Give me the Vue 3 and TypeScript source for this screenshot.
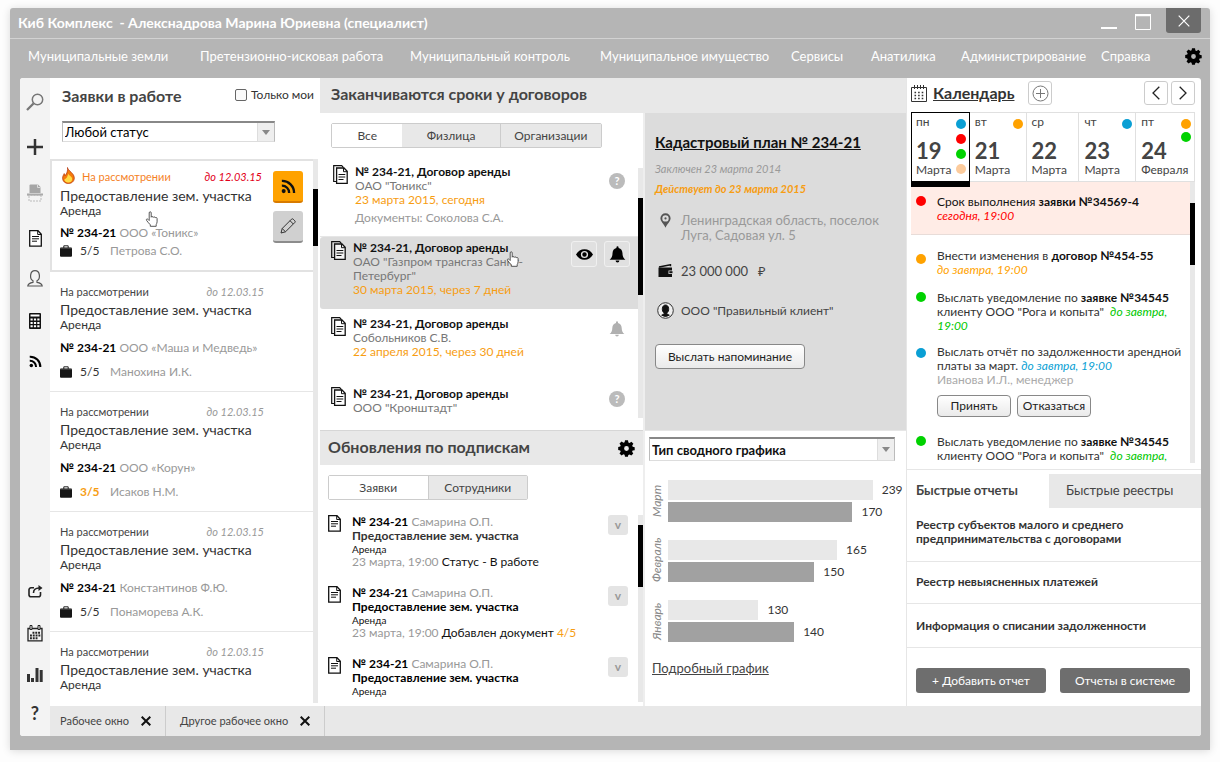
<script setup lang="ts">
import { ref } from 'vue'

interface Request { id: number; who?: string; progress?: string; person?: string; hot?: boolean; late?: boolean }
interface Contract { id: number; owner: string; due?: string; note?: string; state: 'help' | 'open' | 'bell' }
interface Update { id: number; text?: string; progress?: string; fresh?: boolean }
interface Day { name: string; num: number; month: string; dots: string[] }
interface Bar { value: number; share: number }

const menu = ['Муниципальные земли', 'Претензионно-исковая работа', 'Муниципальный контроль', 'Муниципальное имущество', 'Сервисы', 'Анатилика', 'Администрирование', 'Справка']

const onlyMine = ref(false)
const status = ref('Любой статус')
const chartType = ref('Тип сводного графика')

const requests: Request[] = [
  { id: 1, who: 'ООО «Тоникс»', progress: '5/5', person: 'Петрова С.О.', hot: true },
  { id: 2, who: 'ООО «Маша и Медведь»', progress: '5/5', person: 'Манохина И.К.' },
  { id: 3, who: 'ООО «Корун»', progress: '3/5', person: 'Исаков Н.М.', late: true },
  { id: 4, who: 'Константинов Ф.Ю.', progress: '5/5', person: 'Понаморева А.К.' },
  { id: 5 },
]

const contracts: Contract[] = [
  { id: 1, owner: 'ОАО "Тоникс"', due: '23 марта 2015, сегодня', note: 'Документы: Соколова С.А.', state: 'help' },
  { id: 2, owner: 'ОАО "Газпром трансгаз Санкт-Петербург"', due: '30 марта 2015, через 7 дней', state: 'open' },
  { id: 3, owner: 'Собольников С.В.', due: '22 апреля 2015, через 30 дней', state: 'bell' },
  { id: 4, owner: 'ООО "Кронштадт"', state: 'help' },
]

const updates: Update[] = [
  { id: 1, text: 'Статус - В работе' },
  { id: 2, text: 'Добавлен документ', progress: '4/5', fresh: true },
  { id: 3, fresh: true },
]

const chart: { month: string; bars: Bar[] }[] = [
  { month: 'Март', bars: [{ value: 239, share: 86 }, { value: 170, share: 77.5 }] },
  { month: 'Февраль', bars: [{ value: 165, share: 71 }, { value: 150, share: 61.5 }] },
  { month: 'Январь', bars: [{ value: 130, share: 38 }, { value: 140, share: 53 }] },
]

const days: Day[] = [
  { name: 'пн', num: 19, month: 'Марта', dots: ['blue', 'red', 'green', 'peach'] },
  { name: 'вт', num: 21, month: 'Марта', dots: ['orange'] },
  { name: 'ср', num: 22, month: 'Марта', dots: [] },
  { name: 'чт', num: 23, month: 'Марта', dots: ['blue'] },
  { name: 'пт', num: 24, month: 'Февраля', dots: ['orange', 'green'] },
]

const reports = ['Реестр субъектов малого и среднего предпринимательства с договорами', 'Реестр невыясненных платежей', 'Информация о списании задолженности']
const openWindows = ['Рабочее окно', 'Другое рабочее окно']
</script>

<template>
  <svg class="sprite" aria-hidden="true">
    <symbol id="i-gear" viewBox="0 0 17 17">
      <path fill="currentColor" fill-rule="evenodd" d="M7 .3h3l.4 2.1 1.2.5 1.8-1.2 2 2.1-1.2 1.8.5 1.2 2 .4v3l-2.1.4-.5 1.2 1.2 1.8-2 2-1.8-1.2-1.2.5-.4 1.9H7l-.4-2-1.2-.5-1.8 1.2-2.1-2 1.2-1.8-.5-1.2L.2 10V7l2-.4.5-1.2-1.2-1.8 2.1-2 1.8 1.2 1.2-.5zM8.500 6.100a2.400 2.400 0 1 0 0 4.800 2.400 2.400 0 0 0 0-4.800z" />
    </symbol>
    <symbol id="i-doc" viewBox="0 0 13 17">
      <path fill="#fff" stroke="#111" stroke-width="1.300" d="M.7.700h8.300l3.300 3.500v12H.7z" />
      <path fill="none" stroke="#111" d="M8.700.800v3.700h3.500M3 6.500h7M3 8.800h7M3 11.200h5" />
    </symbol>
    <symbol id="i-docs" viewBox="0 0 15 20">
      <path fill="none" stroke="#111" stroke-width="1.200" d="M3.500 16.500H.7V.7h8l1.800 2" />
      <path fill="#fff" fill-opacity=".7" stroke="#111" stroke-width="1.300" d="M3.600 3h7.400l3.200 3.300v12H3.600z" />
      <path fill="none" stroke="#111" d="M10.500 3v3.700h3.600M5.500 9.500h6.800M5.500 12h6.800M5.500 14.500h5" />
    </symbol>
    <symbol id="i-case" viewBox="0 0 12 12">
      <path fill="none" stroke="#222" d="M3.800 3V.8h4.400V3" />
      <rect y="2.500" width="12" height="9.300" rx="1" fill="#161616" />
      <path stroke="#555" stroke-width=".7" d="M.5 3.300h11" />
    </symbol>
    <symbol id="i-rss" viewBox="0 0 14 14">
      <circle cx="2.500" cy="11.300" r="1.900" fill="currentColor" />
      <path fill="none" stroke="currentColor" stroke-width="2.200" d="M.8 6.200a6.600 6.600 0 0 1 6.800 6.800M.8 1.800A11 11 0 0 1 12.200 13" />
    </symbol>
    <symbol id="i-bell" viewBox="0 0 16 16">
      <path fill="currentColor" d="M7 1.300a1 1 0 0 1 2 0v.6c2.400.5 3.600 2.400 3.700 5 .1 3 .8 4.600 2.700 6H.6c1.900-1.400 2.600-3 2.700-6 .1-2.600 1.300-4.500 3.700-5zM6.200 13.700h3.600a1.800 1.800 0 0 1-3.600 0z" />
    </symbol>
    <symbol id="i-hand" viewBox="0 0 14 16">
      <path fill="#fff" stroke="#444" stroke-width=".9" d="M4.200 9.500V1.900c0-1.600 2-1.600 2 0v4.300c.2-1.100 1.800-1 2 .2.400-.9 1.800-.7 2 .4.600-.7 1.900-.4 1.900.8v3.200c0 1.200-.6 2-.9 2.800v1.700H5.300v-1.500C4 12.700 2.900 10.900 1.700 9.600.600 8.300 2.200 7.400 3.200 8.500z" />
    </symbol>
    <symbol id="i-x" viewBox="0 0 10 10">
      <path fill="none" stroke="#111" stroke-width="2" d="M.7.700l8.600 8.600M9.300.700L.7 9.300" />
    </symbol>
  </svg>

  <div class="window">
    <header class="titlebar">
      <h1>Киб Комплекс&nbsp; - Алекснадрова Марина Юриевна (специалист)</h1>
      <button class="win-btn" aria-label="Свернуть"><svg width="16" height="16"><path d="M0 14h16" stroke="#fff" stroke-width="2" /></svg></button>
      <button class="win-btn" aria-label="Развернуть"><svg width="16" height="16"><path d="M.5 1.500v14h15v-14" fill="none" stroke="#fff" /><path d="M0 1h16" stroke="#fff" stroke-width="2.500" /></svg></button>
      <button class="win-btn close" aria-label="Закрыть"><svg width="12" height="12"><path d="M.7.700l10.600 10.600M11.300.700L.7 11.300" stroke="#fff" stroke-width="1.200" /></svg></button>
    </header>

    <div class="menubar">
      <nav><a v-for="m in menu" :key="m" href="#">{{ m }}</a></nav>
      <button class="plain" aria-label="Настройки"><svg width="17" height="17"><use href="#i-gear" /></svg></button>
    </div>

    <div class="body">
      <aside class="rail">
        <button class="plain" aria-label="Поиск"><svg width="18" height="18" fill="none" stroke="#777"><circle cx="11.500" cy="6.500" r="5.200" stroke-width="1.500" /><path d="M7.500 10.500L1 17" stroke-width="2.300" /></svg></button>
        <button class="plain add" aria-label="Добавить"><svg width="16" height="16"><path d="M8 0v16M0 8h16" stroke="#333" stroke-width="2.500" /></svg></button>
        <button class="plain print" aria-label="Печать"><svg width="16" height="18"><path d="M2.500 9V1.500a1 1 0 0 1 1-1h7.500L13.500 3v6z" fill="#a6a6a6" /><path d="M10.500.500v3h3" fill="none" stroke="#ddd" /><path d="M0 9.500h16v2H0z" fill="#aaa" /><path d="M.5 11.500h15M2 12v5h12v-5" fill="none" stroke="#bbb" stroke-dasharray="2 1" /></svg></button>
        <button class="plain paper" aria-label="Документы"><svg width="13" height="17"><use href="#i-doc" /></svg></button>
        <button class="plain person" aria-label="Клиенты"><svg width="16" height="17" fill="none" stroke="#555" stroke-width="1.200"><path d="M6 10.800C2.500 9 2.500.7 8 .7s5.500 8.300 2 10.100v1.500c3 .5 5 1.200 5.200 3.700H.8c.2-2.500 2.200-3.200 5.200-3.700z" /></svg></button>
        <button class="plain calc" aria-label="Калькулятор"><svg width="12" height="16"><rect width="12" height="16" rx="1" fill="#111" /><path fill="#fff" d="M1.500 1.500h9v2h-9zM1.500 5.500h2.200v2H1.500zM4.900 5.500h2.200v2H4.900zM8.300 5.500h2.200v2H8.300zM1.500 8.900h2.200v2H1.500zM4.900 8.900h2.200v2H4.900zM8.300 8.900h2.200v2H8.300zM1.500 12.200h2.200v2H1.500zM4.900 12.200h2.200v2H4.900zM8.300 12.200h2.200v2H8.300z" /></svg></button>
        <button class="plain feed" aria-label="Подписки"><svg width="13" height="13"><use href="#i-rss" /></svg></button>
        <span class="grow"></span>
        <button class="plain" aria-label="Поделиться"><svg width="15" height="13" fill="none" stroke="#222" stroke-width="1.600"><path d="M6 2.800H3A2 2 0 0 0 1 5v4.800a2 2 0 0 0 2 2h7.500a2 2 0 0 0 2-2V7" /><path d="M5.500 8C5.500 5 7.500 3 11 3" /><path d="M10.500 0l4 3-4 3z" fill="#222" stroke="none" /></svg></button>
        <button class="plain cal" aria-label="Календарь"><svg width="16" height="17" fill="none" stroke="#222"><path d="M1 3.500h14v12.300H1z" stroke-width="1.300" /><path d="M3 .5h2v4H3zM11 .5h2v4h-2z" fill="#f3f3f3" /><path d="M5.500 7.800h8M3 10.500h10.500M3 13.200h8" stroke-width="1.900" stroke-dasharray="1.900 .9" /></svg></button>
        <button class="plain stats" aria-label="Статистика"><svg width="16" height="14"><path d="M0 6h3v8H0zM4 10h3v4H4zM8.500 0h3v14h-3zM12.700 2h3v12h-3z" fill="#333" /></svg></button>
        <button class="plain ask" aria-label="Помощь">?</button>
      </aside>

      <main class="columns">
        <section class="requests">
          <div class="requests-head">
            <div class="head-line">
              <h2>Заявки в работе</h2>
              <label class="mine"><input v-model="onlyMine" type="checkbox">Только мои</label>
            </div>
            <div class="select-box">
              <select v-model="status" aria-label="Статус"><option>Любой статус</option></select>
              <span class="arrow" aria-hidden="true"></span>
            </div>
          </div>
          <div class="scroller">
            <div class="scroll-content">
              <article v-for="r in requests" :key="r.id" class="request" :class="{ hot: r.hot }">
                <p class="state">
                  <svg v-if="r.hot" class="flame" width="13" height="17"><path d="M5.500.500c.5 3.500 6.800 5.500 6.800 10.500 0 3.500-2.800 5.500-6 5.500S.600 14.300.600 11.200c0-2 1-3.300 1.600-4.600.7.700.8 1.400.9 2.200C4.800 6.800 6 3.600 5.500.500z" fill="#f47a0b" stroke="#b1320c" stroke-width=".7" /><path d="M6.200 6.500c.4 2 4 3 4 5.500s-1.800 3.500-4 3.500-4-1.200-3.800-3.200c1.200.2 3.400-2.300 3.800-5.800z" fill="#ffdc45" /></svg>
                  <span>На рассмотрении</span><i>до 12.03.15</i>
                </p>
                <h3>Предоставление зем. участка</h3>
                <p class="kind">Аренда</p>
                <p v-if="r.who" class="num"><b>№ 234-21</b> {{ r.who }}</p>
                <p v-if="r.person" class="docs"><svg width="12" height="12"><use href="#i-case" /></svg><span :class="{ late: r.late }">{{ r.progress }}</span>{{ r.person }}</p>
                <div v-if="r.hot" class="actions">
                  <button class="act orange" aria-label="Подписаться"><svg width="15" height="15"><use href="#i-rss" /></svg></button>
                  <button class="act" aria-label="Изменить"><svg width="16" height="16" fill="none" stroke="#333"><path d="M1 15l1.200-4.500L11.500 1.200a1.200 1.200 0 0 1 1.700 0l1.600 1.600a1.200 1.200 0 0 1 0 1.700L5.500 13.800zM2.200 10.500l3.300 3.300M10 2.700L13.300 6" /></svg></button>
                </div>
                <svg v-if="r.hot" class="hand" width="14" height="16"><use href="#i-hand" /></svg>
              </article>
            </div>
            <div class="track"><span class="thumb t-req"></span></div>
          </div>
        </section>

        <div class="middle">
          <h2 class="wide-head">Заканчиваются сроки у договоров</h2>
          <div class="middle-grid">
            <section class="contracts">
              <div class="tabs three">
                <button class="on">Все</button><button>Физлица</button><button>Организации</button>
              </div>
              <div class="scroller">
                <div class="scroll-content">
                  <article v-for="c in contracts" :key="c.id" class="contract" :class="['c' + c.id, { open: c.state === 'open' }]">
                    <svg class="lead" width="15" height="20"><use href="#i-docs" /></svg>
                    <div class="text">
                      <h4>№ 234-21, Договор аренды</h4>
                      <p class="owner">{{ c.owner }}</p>
                      <p v-if="c.due" class="due">{{ c.due }}</p>
                      <p v-if="c.note" class="note">{{ c.note }}</p>
                    </div>
                    <span v-if="c.state === 'help'" class="help">?</span>
                    <svg v-else-if="c.state === 'bell'" class="pale-bell" width="16" height="16"><use href="#i-bell" /></svg>
                    <template v-else>
                      <button class="square" aria-label="Смотреть"><svg width="17" height="11"><path fill-rule="evenodd" d="M0 5.500C2 2 5 .2 8.500.2S15 2 17 5.500c-2 3.500-5 5.300-8.500 5.300S2 9 0 5.500zM8.500 1.900a3.600 3.600 0 1 0 0 7.200 3.600 3.600 0 0 0 0-7.200z" /><circle cx="8.500" cy="5.500" r="2.200" /></svg></button>
                      <button class="square" aria-label="Напомнить"><svg width="17" height="17"><use href="#i-bell" /></svg></button>
                      <svg class="hand" width="14" height="16"><use href="#i-hand" /></svg>
                    </template>
                  </article>
                </div>
                <div class="track"><span class="thumb t-con"></span></div>
              </div>
            </section>

            <section class="detail">
              <h3><a href="#">Кадастровый план № 234-21</a></h3>
              <p class="signed">Заключен 23 марта 2014</p>
              <p class="valid">Действует до 23 марта 2015</p>
              <p class="row address"><svg width="11" height="15"><path fill="#555" fill-rule="evenodd" d="M5.500.200a5.100 5.100 0 0 1 5.100 5.100c0 3-3.300 5.500-5.100 9.500C3.700 10.800.400 8.300.400 5.300A5.100 5.100 0 0 1 5.500.200zm0 2a3.200 3.200 0 1 0 0 6.400 3.200 3.200 0 0 0 0-6.400z" /><circle cx="5.500" cy="5.400" r="1.100" fill="#555" /></svg><span>Ленинградская область, поселок Луга, Садовая ул. 5</span></p>
              <p class="row sum"><svg width="15" height="14"><path d="M1 3L12.500.700v1.500" fill="none" stroke="#111" stroke-width="1.400" /><path d="M.5 3.500h13.500v3h-3.500v3.500H14V13H.5z" fill="#111" /><path d="M11.300 7.200h3.200v2h-3.200z" fill="#111" /></svg><span>23 000 000 &nbsp; ₽</span></p>
              <p class="row client"><svg width="17" height="17"><circle cx="8.500" cy="8.500" r="7.800" fill="#fff" fill-opacity=".5" stroke="#333" /><path d="M7.200 11C4.300 9.200 4.800 3 8.500 3s4.200 6.200 1.300 8v1l2.500 1.200a7 7 0 0 1-7.600 0L7.200 12z" fill="#111" stroke="#111" /></svg><span>ООО "Правильный клиент"</span></p>
              <button class="soft remind">Выслать напоминание</button>
            </section>

            <section class="updates">
              <header>
                <h2>Обновления по подпискам</h2>
                <button class="plain" aria-label="Настройки подписок"><svg width="17" height="17"><use href="#i-gear" /></svg></button>
              </header>
              <div class="tabs two">
                <button class="on">Заявки</button><button>Сотрудники</button>
              </div>
              <div class="scroller">
                <div class="scroll-content">
                  <article v-for="u in updates" :key="u.id" class="update">
                    <svg class="lead" width="13" height="17"><use href="#i-doc" /></svg>
                    <div class="text">
                      <p class="who"><b>№ 234-21</b> Самарина О.П.</p>
                      <h4 :class="{ fresh: u.fresh }">Предоставление зем. участка</h4>
                      <p class="small">Аренда</p>
                      <p v-if="u.text" class="when">23 марта, 19:00 <span>{{ u.text }}</span> <em v-if="u.progress">{{ u.progress }}</em></p>
                    </div>
                    <button class="more" aria-label="Раскрыть">v</button>
                  </article>
                </div>
                <div class="track"><span class="thumb t-upd"></span></div>
              </div>
            </section>

            <section class="chart">
              <div class="select-box strong">
                <select v-model="chartType" aria-label="Тип графика"><option>Тип сводного графика</option></select>
                <span class="arrow" aria-hidden="true"></span>
              </div>
              <div v-for="g in chart" :key="g.month" class="group">
                <span class="month">{{ g.month }}</span>
                <div class="bars">
                  <div v-for="b in g.bars" :key="b.value" class="bar-row">
                    <span class="bar" :style="{ width: b.share + '%' }"></span>{{ b.value }}
                  </div>
                </div>
              </div>
              <a class="full" href="#">Подробный график</a>
            </section>
          </div>
        </div>

        <section class="side">
          <header class="cal-head">
            <svg width="16" height="17" fill="none" stroke="#333"><path d="M.5 2.500h15v14H.5zM3.500 0v4M6.500 0v4M9.500 0v4M12.500 0v4" /><path d="M3.500 7.500h9.500M3.500 10.500h9.500M3.500 13.500h9.500" stroke-width="1.600" stroke-dasharray="1.600 2" /></svg>
            <h2><a href="#">Календарь</a></h2>
            <button class="box plus" aria-label="Добавить событие"><svg width="17" height="17" fill="none" stroke="#777"><circle cx="8.500" cy="8.500" r="7.500" /><path d="M8.500 4v9M4 8.500h9" /></svg></button>
            <button class="box" aria-label="Назад"><svg width="8" height="14" fill="none" stroke="#222" stroke-width="1.300"><path d="M7.300.700L1 7l6.300 6.300" /></svg></button>
            <button class="box" aria-label="Вперёд"><svg width="8" height="14" fill="none" stroke="#222" stroke-width="1.300"><path d="M.7.700L7 7 .7 13.300" /></svg></button>
          </header>
          <div class="days">
            <button v-for="d in days" :key="d.name" class="day" :class="{ today: d.num === 19 }">
              <span class="wd">{{ d.name }}</span><strong>{{ d.num }}</strong><span class="mon">{{ d.month }}</span>
              <span class="dots"><i v-for="c in d.dots" :key="c" class="dot" :class="c"></i></span>
            </button>
          </div>
          <div class="scroller events-box">
            <ul class="events">
              <li class="urgent"><i class="dot red"></i><p>Срок выполнения <b>заявки №34569-4</b><br><em class="c-red">сегодня, 19:00</em></p></li>
              <li class="e2"><i class="dot orange"></i><p>Внести изменения в <b>договор №454-55</b><br><em class="c-orange">до завтра, 19:00</em></p></li>
              <li><i class="dot green"></i><p>Выслать уведомление по <b>заявке №34545</b><br>клиенту ООО "Рога и копыта" &nbsp;<em class="c-green">до завтра, 19:00</em></p></li>
              <li class="e4"><i class="dot blue"></i><div><p>Выслать отчёт по задолженности арендной платы за март. <em class="c-blue">до завтра, 19:00</em></p><p class="by">Иванова И.Л., менеджер</p>
                <div class="answers"><button class="soft">Принять</button><button class="soft">Отказаться</button></div></div></li>
              <li class="last"><i class="dot green"></i><p>Выслать уведомление по <b>заявке №34545</b><br>клиенту ООО "Рога и копыта" &nbsp;<em class="c-green">до завтра,</em></p></li>
            </ul>
            <div class="track"><span class="thumb t-cal"></span></div>
          </div>
          <div class="quick">
            <div class="quick-tabs"><button class="on">Быстрые отчеты</button><button>Быстрые реестры</button></div>
            <ul class="reports"><li v-for="r in reports" :key="r"><a href="#">{{ r }}</a></li></ul>
            <div class="quick-actions"><button>+ Добавить отчет</button><button>Отчеты в системе</button></div>
          </div>
        </section>
      </main>

      <footer class="taskbar">
        <div v-for="w in openWindows" :key="w" class="task">{{ w }}<button class="plain" aria-label="Закрыть окно"><svg width="10" height="10"><use href="#i-x" /></svg></button></div>
      </footer>
    </div>
  </div>
</template>

<style>
body { background: #fdfdfd; }
</style>

<style scoped>
* { box-sizing: border-box; }
h1, h2, h3, h4, p, ul { margin: 0; padding: 0; list-style: none; }
button, select, input { font: inherit; color: inherit; margin: 0; padding: 0; }
button { cursor: pointer; }
svg { display: block; flex: none; }
.sprite { position: absolute; width: 0; height: 0; }
.plain { border: 0; background: none; display: grid; place-items: center; flex: none; color: #000; }

.window {
  margin: 8px 10px 12px;
  height: calc(100vh - 20px);
  min-height: 600px;
  display: flex;
  flex-direction: column;
  padding-bottom: 14px;
  background: #b5b5b5;
  border-radius: 3px 3px 0 0;
  box-shadow: 0 1px 9px rgba(0, 0, 0, .14);
  font: 12px/14px Lato, "Noto Sans", sans-serif;
  color: #333;
}
.titlebar { display: flex; height: 31px; padding: 0 9px 0 8px; border-bottom: 1px solid #d2d2d2; color: #fff; }
.titlebar h1 { flex: 1; font-size: 14px; line-height: 30px; }
.win-btn { width: 16px; height: 16px; margin: 6px 18px 0 0; border: 0; background: none; }
.win-btn.close { width: 35px; height: 25px; margin: 0 0 0 -3px; display: grid; place-items: center; background: #6c6c6c; border-radius: 0 0 3px 3px; }
.menubar { display: flex; align-items: center; height: 39px; padding: 0 8px 4px 18px; }
.menubar nav { flex: 1; display: grid; grid-template-columns: 172fr 210fr 190fr 191fr 80fr 90fr 140fr 84fr; color: #fff; font-size: 13px; line-height: 16px; padding-bottom: 2px; }
.menubar a { color: inherit; text-decoration: none; white-space: nowrap; }

.body { flex: 1; min-height: 0; margin: 0 9px 0 10px; display: grid; grid-template: minmax(0, 1fr) 30px / 30px minmax(0, 1fr); background: #fff; border-radius: 3px; overflow: hidden; }
.rail { grid-row: 1 / 3; display: flex; flex-direction: column; align-items: center; padding: 15px 0 14px; background: #f3f3f3; }
.rail .add { margin-top: 28px; }
.rail .print { margin-top: 29px; }
.rail .paper { margin-top: 28px; }
.rail .person { margin-top: 23px; }
.rail .calc { margin-top: 26px; }
.rail .feed { margin-top: 26px; }
.grow { flex: 1; }
.rail .cal { margin-top: 27px; }
.rail .stats { margin-top: 26px; }
.rail .ask { margin-top: 22px; font-size: 18px; line-height: 18px; font-weight: 700; color: #333; }
.columns { min-height: 0; display: grid; grid-template-columns: minmax(0, 270fr) minmax(0, 587fr) minmax(0, 294fr); grid-template-rows: minmax(0, 1fr); }

.scroller { flex: 1; min-height: 0; display: flex; }
.scroll-content { flex: 1; min-width: 0; overflow: hidden; }
.track { position: relative; width: 5px; flex: none; background: #e8e8e8; }
.thumb { position: absolute; left: 0; width: 5px; background: #000; }

h2 { font-size: 16px; line-height: 20px; color: #444; }

/* requests */
.requests { display: flex; flex-direction: column; min-height: 0; }
.requests-head { height: 81px; padding: 8px 6px 0 12px; }
.head-line { display: flex; justify-content: space-between; }
.mine { display: flex; align-items: center; gap: 4px; height: 18px; }
.mine input { appearance: none; width: 12px; height: 12px; border: 1px solid #666; border-radius: 2px; background: #fafafa; }
.mine input:checked { background: #555; }
.select-box { position: relative; display: flex; background: #fff; border: 1px solid #bbb; border-top: 2px solid #888; border-bottom-color: #ddd; }
.select-box select { flex: 1; height: 18px; padding-left: 2px; border: 0; background: transparent; appearance: none; color: #000; font-size: 13px; line-height: 18px; }
.arrow { position: absolute; right: 0; top: 0; bottom: 0; width: 17px; display: grid; place-items: center; background: #eee; border-left: 1px solid #ddd; pointer-events: none; }
.arrow::after { content: ""; border: 4px solid transparent; border-top: 5px solid #888; border-bottom: 0; }
.requests .select-box { width: 213px; margin-top: 15px; }
.requests .scroller { padding: 0 2px 3px 0; }
.request { position: relative; height: 120px; padding: 13px 10px; border-bottom: 1px solid #e6e6e6; color: #999; }
.state { display: flex; align-items: center; gap: 7px; width: 204px; height: 14px; font-size: 11px; color: #444; }
.state i { margin-left: auto; color: #999; }
.request h3 { margin-top: 3px; font-size: 14px; font-weight: 400; line-height: 16px; color: #333; }
.kind { color: #333; }
.num { margin-top: 9px; }
.num b { color: #000; }
.docs { display: flex; align-items: center; margin-top: 10px; }
.docs span { width: 22px; margin: 0 8px; color: #333; }
.docs .late { color: #f79d12; font-weight: 700; }
.request.hot { height: 113px; padding: 9px 8px; border: 2px solid #e2e2e2; border-right: 0; }
.hot .state { color: #f5821f; width: 202px; }
.hot .state i { color: #e2001a; }
.flame { margin: -3px 0 0 2px; }
.hot h3 { margin-top: 4px; }
.hot .num { margin-top: 8px; }
.hot .docs { margin-top: 4px; }
.actions { position: absolute; right: 10px; top: 10px; display: grid; gap: 8px; }
.act { width: 30px; height: 32px; display: grid; place-items: center; border: 0; border-bottom: 2px solid #8c8c8c; border-radius: 3px; background: #d0d0d0; color: #111; }
.act.orange { background: #ffa200; border-bottom-color: #d87b00; }
.hand { position: absolute; }
.request .hand { left: 93px; top: 50px; }
.t-req { top: 30px; height: 57px; }

/* contracts, detail, subscriptions and chart */
.middle { display: flex; flex-direction: column; min-height: 0; border-right: 1px solid #e6e6e6; }
.wide-head { height: 35px; padding: 6px 11px 0; background: #e8e8e8; }
.middle-grid { flex: 1; min-height: 0; display: grid; grid-template: minmax(0, 317fr) minmax(0, 276fr) / minmax(0, 325fr) minmax(0, 261fr); }
.contracts, .updates { display: flex; flex-direction: column; min-height: 0; border-right: 2px solid #eee; }
.tabs { display: flex; height: 25px; flex: none; margin: 10px 41px 0 11px; border: 1px solid #ccc; border-radius: 2px; color: #444; }
.tabs button { flex: 1; border: 0; border-left: 1px solid #ccc; background: #e8e8e8; }
.tabs .on { background: #fff; border: 0; }
.three button:nth-child(1) { flex-grow: 71; }
.three button:nth-child(2) { flex-grow: 98; border: 0; }
.three button:nth-child(3) { flex-grow: 101; }
.contracts .scroll-content { margin-top: 12px; }
.contracts .track { margin: 20px 0 12px; }
.contract { position: relative; display: flex; gap: 7px; min-height: 40px; padding: 4px 8px 12px 11px; }
.contract .text { flex: 1; }
.c1 { padding: 5px 13px 11px 13px; border-bottom: 1px solid #e6e6e6; }
.c1 .help { margin-top: 8px; }
.open { background: #dcdcdc; border-radius: 3px 0 0 3px; }
.open .text { margin-right: 16px; }
.c3 { padding: 8px 13px 28px 11px; }
.c4 { padding: 0 13px 12px 11px; }
h4 { font-size: 12px; line-height: 14px; color: #111; }
.owner { color: #777; }
.due { color: #f79d12; }
.note { margin-top: 4px; color: #999; }
.help { width: 16px; height: 16px; margin-top: 4px; border-radius: 50%; background: #bbb; color: #fff; font-size: 11px; font-weight: 700; line-height: 16px; text-align: center; flex: none; }
.pale-bell { margin-top: 4px; color: #b0b0b0; }
.square { width: 26px; height: 26px; flex: none; display: grid; place-items: center; border: 1px solid #f0f0f0; border-radius: 3px; background: #e0e0e0; color: #000; }
.contract .hand { left: 186px; top: 14px; }
.t-con { top: 30px; height: 97px; }

.detail { padding: 19px 10px 0 10px; background: #dcdcdc; }
.detail h3 { font-size: 16px; line-height: 20px; white-space: nowrap; }
.detail h3 a { color: #111; font-size: 15px; }
.signed, .valid { font-style: italic; font-size: 11px; line-height: 14px; color: #999; }
.signed { margin-top: 10px; }
.valid { margin-top: 6px; font-weight: 700; color: #f79d12; }
.row { display: grid; grid-template-columns: 20px 1fr; gap: 6px; align-items: center; color: #444; font-size: 13px; line-height: 16px; }
.row svg { justify-self: center; }
.address { margin-top: 17px; align-items: start; line-height: 15px; color: #999; }
.sum { margin-top: 20px; }
.client { margin-top: 23px; font-size: 12px; }
.soft { height: 22px; border: 1px solid #888; border-radius: 4px; background: linear-gradient(#fff, #eaeaea); color: #222; }
.remind { height: 25px; width: 150px; margin-top: 25px; }

.updates header { display: flex; justify-content: space-between; align-items: center; height: 35px; flex: none; padding: 0 8px; background: #e8e8e8; border-top: 1px solid #d6d6d6; }
.updates h2 { padding-bottom: 2px; }
.two { margin: 10px 115px 0 8px; }
.updates .scroller { padding-bottom: 4px; margin-top: 15px; }
.update { display: flex; gap: 11px; height: 71px; padding: 0 10px 0 8px; color: #999; }
.update .text { flex: 1; }
.update b { color: #000; }
.update h4 { color: #333; }
.update .fresh { color: #000; }
.small { font-size: 10px; line-height: 12px; color: #111; }
.when span { color: #111; }
.when em { color: #f79d12; font-style: normal; }
.more { width: 20px; height: 20px; border: 0; border-radius: 3px; background: #e4e4e4; color: #999; flex: none; font-weight: 700; line-height: 18px; }
.t-upd { top: 10px; height: 62px; }

.chart { padding: 6px 0 0 4px; border-top: 1px solid #e6e6e6; }
.chart .select-box { margin: 0 11px 19px 0; }
.strong select { height: 21px; font-weight: 700; color: #111; }
.group { display: grid; grid-template: 42px / 15px minmax(0, 1fr); gap: 4px; margin-bottom: 18px; }
.group:last-of-type { margin-bottom: 16px; }
.month { writing-mode: vertical-rl; transform: rotate(180deg); font-style: italic; color: #888; text-align: center; line-height: 15px; justify-self: center; }
.bars { display: grid; grid-auto-rows: 20px; gap: 2px; }
.bar-row { display: flex; align-items: center; gap: 9px; min-width: 0; }
.bar { flex: none; height: 20px; background: #e8e8e8; }
.bar-row + .bar-row .bar { background: #a1a1a1; }
.full { display: inline-block; margin: 3px 0 0 3px; font-size: 13px; color: #444; }

/* calendar and quick reports */
.side { display: flex; flex-direction: column; min-height: 0; }
.cal-head { display: flex; align-items: center; height: 34px; padding: 0 6px 4px 4px; flex: none; }
.cal-head h2 { margin: 0 14px 0 6px; }
.cal-head a { color: #333; }
.box { width: 24px; height: 24px; margin-left: 3px; display: grid; place-items: center; border: 1px solid #ccc; border-radius: 3px; background: #fff; }
.box.plus { margin: 0 auto 0 0; }
.days { display: grid; grid-template-columns: 59fr 57fr 53fr 57fr 58fr; height: 70px; flex: none; margin: 0 6px 0 4px; border: 1px solid #e0e0e0; border-width: 1px 1px 1px 0; }
.day { position: relative; display: block; border: 0; border-right: 1px solid #e0e0e0; background: #fff; text-align: left; padding: 0 0 3px 5px; color: #444; }
.day:last-child { border-right: 0; }
.day .wd { display: block; line-height: 14px; font-size: 12px; }
.day strong { display: block; margin-top: 9px; font-size: 22px; line-height: 26px; }
.day .mon { display: block; line-height: 12px; }
.day.today { z-index: 1; margin: -1px 0 -6px; padding: 0 0 3px 4px; border: 1px solid #000; border-bottom-width: 6px; }
.dot { display: block; flex: none; width: 10px; height: 10px; border-radius: 50%; }
.dots { position: absolute; right: 3px; top: 6px; display: grid; gap: 3px; }
.today .dots { gap: 5px; }
.blue { background: #0a9fd4; }
.red { background: #f00; }
.green { background: #00d200; }
.peach { background: #fccb9c; }
.orange { background: #ffa200; }
.events-box { padding: 0 6px 6px 4px; border-bottom: 1px solid #e6e6e6; }
.events { flex: 1; min-width: 0; overflow: hidden; }
.events li { display: flex; gap: 11px; padding: 0 6px 0 5px; margin-bottom: 12px; }
.events .last { margin-bottom: 0; }
.events .dot { margin-top: 1px; }
.events b { color: #111; }
.events .urgent { height: 53px; margin-bottom: 14px; padding-top: 13px; background: #ffece6; border-bottom: 1px solid #e8dcd8; color: #111; }
.events .e2 { margin-bottom: 14px; }
.events .e2 .dot { margin-top: 5px; }
.events .e4 .dot { margin-top: 3px; }
.events .e4 { margin-bottom: 18px; }
.c-red { color: #f00; }
.c-orange { color: #ffa200; }
.c-green { color: #00c800; }
.c-blue { color: #0a9fd4; }
.by { color: #aaa; }
.answers { display: flex; gap: 6px; margin-top: 8px; }
.answers button { width: 74px; }
.t-cal { top: 21px; height: 62px; }
.quick { flex: none; }
.quick-tabs { display: grid; grid-template-columns: 142fr 152fr; padding-top: 4px; }
.quick-tabs button { height: 34px; border: 0; background: #e8e8e8; font-size: 13px; text-align: left; padding: 0 0 2px 17px; color: #444; }
.quick-tabs .on { background: #fff; padding-left: 9px; font-weight: 700; }
.reports li { padding: 13px 30px 14px 9px; border-bottom: 1px solid #e6e6e6; }
.reports li:first-child { padding: 10px 30px 15px 9px; }
.reports li:last-child { padding: 15px 30px 14px 9px; }
.reports a { color: #333; font-weight: 700; text-decoration: none; }
.quick-actions { display: flex; gap: 14px; padding: 20px 11px 13px 9px; }
.quick-actions button { flex: 1; height: 25px; border: 0; border-radius: 3px; background: #6e6e6e; color: #fff; }

.taskbar { grid-column: 2; display: flex; background: #e8e8e8; }
.task { display: flex; align-items: center; gap: 12px; padding: 0 14px 0 10px; border-right: 1px solid #ccc; font-size: 11px; color: #444; }
.task + .task { padding-left: 14px; }
</style>
